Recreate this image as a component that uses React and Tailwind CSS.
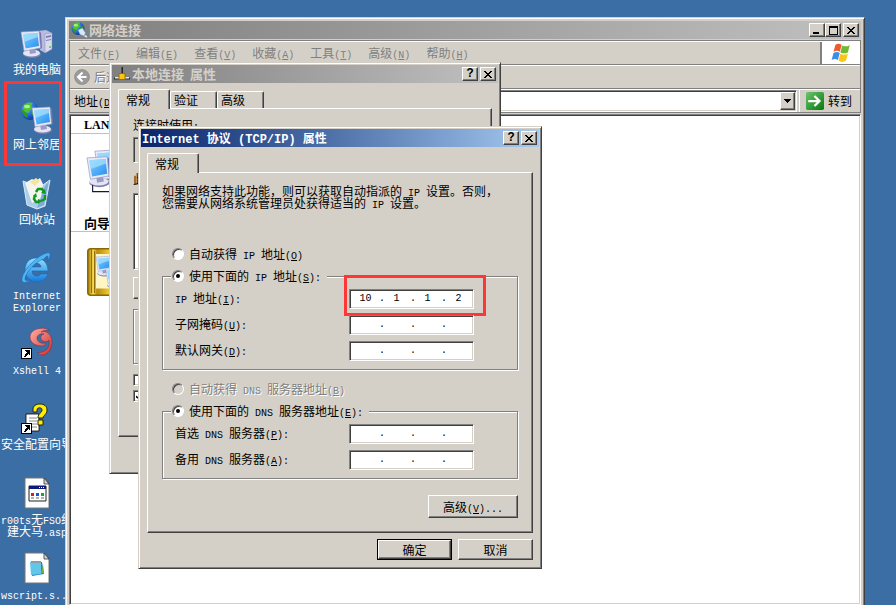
import React from 'react';
import clsx from 'clsx';

const raised =
  'border border-t-white border-l-white border-r-[#404040] border-b-[#404040] shadow-[inset_-1px_-1px_0_#808080]';
const sunken =
  'border border-t-[#808080] border-l-[#808080] border-r-white border-b-white shadow-[inset_1px_1px_0_#404040,inset_-1px_-1px_0_#d4d0c8]';
const frame =
  'bg-[#d4d0c8] border border-t-[#d4d0c8] border-l-[#d4d0c8] border-r-[#404040] border-b-[#404040] shadow-[inset_1px_1px_0_#fff,inset_-1px_-1px_0_#808080]';
const etched = 'border border-[#808080] shadow-[1px_1px_0_#fff,inset_1px_1px_0_#fff]';
const mono = "font-['Liberation_Mono',monospace]";

// Half-width runs are set smaller so that two of them fill one full-width cell.
// An ampersand marks the access key, which is underlined.
const Txt = ({ children, latin = 'text-[10px]' }) => (
  <span className="whitespace-pre">
    {children.split(/([\x20-\x7e]+)/).map((run, i) =>
      i % 2 ? (
        <span key={i} className={clsx(mono, latin, 'leading-0')}>
          {run.split(/(&\w)/).map((part, j) => (j % 2 ? <u key={j}>{part[1]}</u> : part))}
        </span>
      ) : (
        run
      )
    )}
  </span>
);

const CaptionButton = ({ label, children }) => (
  <button
    type="button"
    aria-label={label}
    className={clsx('flex h-[14px] w-4 items-center justify-center bg-[#d4d0c8] text-xs font-bold leading-3 text-black', mono, raised)}
  >
    {children}
  </button>
);

const CloseGlyph = () => (
  <svg width="8" height="7" viewBox="0 0 8 7" shapeRendering="crispEdges">
    <path d="M0 0h2v1h1v1h2V1h1V0h2v1H7v1H6v1H5v1h1v1h1v1h1v1H6V6H5V5H3v1H2v1H0V6h1V5h1V4h1V3H2V2H1V1H0z" />
  </svg>
);

const HelpAndClose = () => (
  <div className="ml-auto flex gap-0.5">
    <CaptionButton label="帮助">?</CaptionButton>
    <CaptionButton label="关闭">
      <CloseGlyph />
    </CaptionButton>
  </div>
);

const Monitor = ({ x = 0, y = 0 }) => (
  <g transform={`translate(${x} ${y})`}>
    <ellipse cx="11" cy="24" rx="9" ry="4" fill="#7d7fb0" />
    <ellipse cx="10.5" cy="23" rx="8.5" ry="3.6" fill="#e4e4f2" />
    <path d="M8 18l6-1 1 6-6 1z" fill="#9a9cc8" />
    <path d="M18 1l2 2 1 15-2 1z" fill="#6e74ae" />
    <path d="M0 2L18 1l1.500 17L3 21z" fill="#e8ebf7" stroke="#8f96c4" strokeWidth=".6" />
    <path d="M2 4l14.500-1L18 16 4.500 18.500z" fill="url(#screen)" />
    <path d="M2 4l14.500-1 .5 4-14 5z" fill="#a9e2ff" opacity=".7" />
  </g>
);

const Globe = ({ cx, cy, r }) => (
  <g>
    <circle cx={cx} cy={cy} r={r} fill="url(#ocean)" />
    <g transform={`translate(${cx - r} ${cy - r}) scale(${r / 9})`} fill="#4fc42f">
      <path d="M3 3c3-3 7-3 9-2l-2 3 2 2-3 2-2 3-3-1-2-3z" />
      <path d="M1 7l3 3 3 2-1 4c-3-2-5-4-5-9zM11 8l4-3 2 4-3 5-4-2z" fill="#2f9a24" />
    </g>
    <ellipse cx={cx - r / 3} cy={cy - r / 2} rx={r / 3} ry={r / 5} fill="#d9ffb0" opacity=".7" />
  </g>
);

const SharedDefs = () => (
  <svg className="absolute size-0" aria-hidden="true">
    <defs>
      <linearGradient id="screen" x1="0" y1="0" x2="1" y2="1">
        <stop offset="0" stopColor="#7fd3ff" />
        <stop offset="1" stopColor="#2a8df0" />
      </linearGradient>
      <radialGradient id="ocean" cx=".35" cy=".3" r=".8">
        <stop offset="0" stopColor="#6fb6f5" />
        <stop offset=".6" stopColor="#1c5fd0" />
        <stop offset="1" stopColor="#0a2c86" />
      </radialGradient>
      <linearGradient id="ie" x1="0" y1="0" x2="0" y2="1">
        <stop offset="0" stopColor="#8fe0ff" />
        <stop offset="1" stopColor="#1779d8" />
      </linearGradient>
      <linearGradient id="shell" x1="0" y1="0" x2="1" y2="1">
        <stop offset="0" stopColor="#ffb0a6" />
        <stop offset="1" stopColor="#d02c2c" />
      </linearGradient>
      <linearGradient id="gold" x1="0" y1="0" x2="1" y2="0">
        <stop offset="0" stopColor="#a87c08" />
        <stop offset=".12" stopColor="#f7dc50" />
        <stop offset=".2" stopColor="#b98a0c" />
        <stop offset=".5" stopColor="#f3d43c" />
        <stop offset="1" stopColor="#b98a0c" />
      </linearGradient>
      <linearGradient id="go" x1="0" y1="0" x2="1" y2="1">
        <stop offset="0" stopColor="#6cc46c" />
        <stop offset="1" stopColor="#067a0c" />
      </linearGradient>
    </defs>
  </svg>
);

const Icon = ({ children, className = 'size-8' }) => (
  <svg viewBox="0 0 32 32" className={clsx('shrink-0 overflow-visible', className)} aria-hidden="true">
    {children}
  </svg>
);

const ShortcutArrow = () => (
  <g shapeRendering="crispEdges">
    <path d="M.5 21.500h10v10H.5z" fill="#fff" stroke="#000" />
    <path d="M4 23h5v5H8v-1H7v1H6v1H5v1H3v-1h1v-2h1v-1h1v-1H5v-1H4z" />
  </g>
);

const Page = ({ children }) => (
  <Icon>
    <path d="M5 1h19l5 6v24H5z" fill="#222" opacity=".3" />
    <path d="M4 1h19l5 6v24H4z" fill="#fff" stroke="#777" />
    <path d="M23 1v6h5z" fill="#cfd6d6" stroke="#333" strokeWidth=".8" />
    {children}
  </Icon>
);

const desktopItems = [
  {
    lines: ['我的电脑'],
    icon: (
      <Icon>
        <path d="M17 4l8-1 6 3v16l-7 4-5-3z" fill="#b9bbdc" />
        <path d="M24 7l7-1v16l-7 4z" fill="#d9daf0" stroke="#8a8cb8" strokeWidth=".5" />
        <path d="M25 9l5-1v2l-5 1zM25 13l5-1v1l-5 1z" fill="#7e80b4" />
        <circle cx="29" cy="20" r="1" fill="#3fd02a" />
        <Monitor y={3} />
      </Icon>
    ),
  },
  {
    lines: ['网上邻居'],
    marked: true,
    icon: (
      <Icon>
        <Globe cx={9} cy={9} r={9} />
        <Monitor x={11} y={4} />
      </Icon>
    ),
  },
  {
    lines: ['回收站'],
    icon: (
      <Icon>
        <path d="M2 4l8 3 12 1 7-5-5 26-8 3-10-4z" fill="#a9cdea" stroke="#dcecf8" />
        <path d="M4 6l7-4 4 2 4-3 3 6-2 14-9 5z" fill="#f4f5ef" />
        <path d="M9 5l6-4 4 3-5 5z" fill="#f5e5a0" />
        <path d="M24 9l4-5-5 24-7 3z" fill="#7fabd6" />
        <g fill="none" stroke="#12981f" strokeWidth="2.500">
          <path d="M15 15l2-3h4l2 3" />
          <path d="M14 18l-1 4 2 3h2" />
          <path d="M24 18v4l-4 2" />
        </g>
        <path d="M20 16l5 1-1-5zM17 22v5l4-3zM12 19l4 1-1-4z" fill="#12981f" />
      </Icon>
    ),
  },
  {
    lines: ['Internet', 'Explorer'],
    icon: (
      <Icon>
        <path
          d="M15 6c7 0 12 5 12 13H11c0 3 2 5 5 5 2 0 3-1 4-2h7c-2 5-6 8-11 8-7 0-12-5-12-12S8 6 15 6zm0 5c-2 0-4 2-4 4h9c0-2-2-4-5-4z"
          fill="url(#ie)"
          stroke="#1668b8"
          strokeWidth=".6"
        />
        <path
          d="M23 7c2-3 4-4 4-2s0 3-1 5c4-6 4-10 0-9C17 3 3 17 1 26c-1 6 4 5 9 2-4 1-6 1-6-1C4 22 14 9 23 7z"
          fill="#4fb5f2"
          stroke="#1668b8"
          strokeWidth=".5"
        />
      </Icon>
    ),
  },
  {
    lines: ['Xshell 4'],
    icon: (
      <Icon>
        <path
          d="M29 3C21-1 9 2 9 10c0 7 8 9 12 9 3 0 4-2 3-3-3 1-8-1-8-5 0-3 4-5 7-4-4 1-4 5-1 7 2 1 5 1 6-1 1 6-1 12-12 13 9 6 15-3 15-11 0-7-5-12-11-10 3-2 6-2 9-2z"
          fill="url(#shell)"
          stroke="#8e2530"
          strokeWidth=".5"
        />
        <ShortcutArrow />
      </Icon>
    ),
  },
  {
    lines: ['安全配置向导'],
    icon: (
      <Icon>
        <path d="M5 12h13v17H5z" fill="#fff" stroke="#000" strokeWidth=".8" />
        <path d="M8 16h8M8 19h8M8 22h8M11 25h5" stroke="#888" />
        <path
          d="M12 10V7c0-3 3-5 7-5s7 2 7 6c0 5-4 5-4 8h-5c0-5 4-5 4-8 0-3-5-3-5 0v2zM17 18h5v5h-5z"
          fill="#ffee00"
          stroke="#222"
        />
        <ShortcutArrow />
      </Icon>
    ),
  },
  {
    lines: ['r00ts无FSO组', '建大马.asp'],
    icon: (
      <Page>
        <path d="M8 9h17v15H8z" fill="#fff" stroke="#222" />
        <path d="M8 9h17v3H8z" fill="#0a1a80" />
        <path d="M18 10h1v1h-1zM20 10h1v1h-1zM22 10h1v1h-1z" fill="#fff" />
        <path d="M10 16h3v3h-3z" fill="#d02020" />
        <path d="M15 16h3v3h-3z" fill="#1c54d8" />
        <path d="M20 16h3v3h-3z" fill="#1fa03a" />
        <path d="M10 21h3M15 21h3M20 21h3" stroke="#666" />
      </Page>
    ),
  },
  {
    lines: ['wscript.s...'],
    icon: (
      <Page>
        <path d="M10 10h11l2 12-12 2z" fill="#2c7fc4" />
        <path d="M9 10h11v12l-10 1z" fill="#62c6ea" />
        <path d="M10 9h10v2H10z" fill="#8aa0a8" />
        <path d="M20 21l2-9 1 9z" fill="#6ab24a" />
      </Page>
    ),
  },
];

const Desktop = () => (
  <ul className="flex w-[74px] flex-col pt-[27px]">
    {desktopItems.map(({ lines, icon, marked }) => (
      <li key={lines[0]} className="relative flex h-[75px] flex-col items-center gap-1 text-white">
        {icon}
        <div className="flex flex-col items-center leading-3">
          {lines.map((line) => (
            <Txt key={line}>{line}</Txt>
          ))}
        </div>
        {marked && <div className="absolute -top-[21px] left-1 h-[85px] w-[58px] border-3 border-[#ff3636]" />}
      </li>
    ))}
  </ul>
);

const menus = ['文件(&F)', '编辑(&E)', '查看(&V)', '收藏(&A)', '工具(&T)', '高级(&N)', '帮助(&H)'];

const bar = 'flex h-6 items-center border-t border-b border-t-white border-b-[#808080]';

const NetworkWindow = () => (
  <section className={clsx('absolute top-[17px] right-[31px] -bottom-1 left-[65px] flex flex-col p-[3px]', frame)}>
    <header className="flex h-[18px] shrink-0 items-center bg-linear-to-r from-[#808080] to-[#c0c0c0] px-0.5 text-[#d4d0c8]">
      <Icon className="size-4">
        <Globe cx={14} cy={13} r={13} />
        <path d="M14 16l9-4 6 10-3 6-8-3z" fill="#d9ebfa" stroke="#5f8fc0" />
        <path d="M27 27l5 3" stroke="#cfe6fa" strokeWidth="3" />
      </Icon>
      <h1 className="ml-0.5 text-[13px] font-bold leading-3">网络连接</h1>
      <div className="ml-auto flex">
        <CaptionButton label="最小化">
          <span className="mt-1.5 mr-0.5 h-0.5 w-1.5 bg-black" />
        </CaptionButton>
        <CaptionButton label="最大化">
          <span className="h-[9px] w-[9px] border border-t-2 border-black" />
        </CaptionButton>
        <span className="w-0.5" />
        <CaptionButton label="关闭">
          <CloseGlyph />
        </CaptionButton>
      </div>
    </header>

    <div className="mt-px border border-b-0 border-l-[#808080] border-r-[#808080] border-t-[#808080]">
      <nav className={bar}>
        <div className="flex flex-1 text-[#808080]">
          {menus.map((menu) => (
            <button key={menu} type="button" className="px-2 leading-3">
              <Txt>{menu}</Txt>
            </button>
          ))}
        </div>
        <div className="flex h-full w-10 items-center justify-center border-l-2 border-[#808080] bg-white">
          <Icon className="size-5">
            <path d="M7 3c4-3 7-2 10 0l-3 11c-3-2-6-2-10 0z" fill="#ee5a2a" />
            <path d="M18 4c4 2 8 2 12-1l-3 12c-4 2-8 2-12 0z" fill="#6cbb2e" />
            <path d="M4 16c4-2 7-2 10 0l-3 11c-3-2-6-2-10 0z" fill="#3f8be8" />
            <path d="M15 17c4 2 8 2 12 0l-3 11c-4 3-8 3-12 0z" fill="#fbc516" />
          </Icon>
        </div>
      </nav>
      <div className={bar}>
        <button type="button" disabled className="flex items-center gap-1 pl-1 leading-3 text-[#808080] [text-shadow:1px_1px_0_#fff]">
          <Icon className="size-4">
            <circle cx="16" cy="16" r="15" fill="#9a9a9a" stroke="#777" />
            <path d="M17 7l-9 9 9 9M8 16h17" fill="none" stroke="#fff" strokeWidth="4" />
          </Icon>
          后退
        </button>
      </div>
      <div className={clsx(bar, 'pl-1')}>
        <label htmlFor="address" className="leading-3">
          <Txt>地址(&D)</Txt>
        </label>
        <div className={clsx('ml-1 flex flex-1 bg-white p-px', sunken)}>
          <select id="address" className="h-[18px] min-w-0 flex-1 appearance-none bg-white outline-none" />
          <span className={clsx('pointer-events-none flex w-[15px] items-center justify-center bg-[#d4d0c8]', raised)}>
            <svg width="7" height="4" viewBox="0 0 7 4" shapeRendering="crispEdges">
              <path d="M0 0h7v1H6v1H5v1H4v1H3V3H2V2H1V1H0z" />
            </svg>
          </span>
        </div>
        <button type="button" className="ml-0.5 flex items-center gap-1 border-l border-white py-0.5 pr-2 pl-1.5 leading-3">
          <Icon className="size-[18px]">
            <rect width="32" height="32" rx="3" fill="url(#go)" />
            <path d="M4 16h20M15 7l9 9-9 9" fill="none" stroke="#fff" strokeWidth="4" />
          </Icon>
          转到
        </button>
      </div>
    </div>

    <main className={clsx('mt-px flex-1 bg-white p-px', sunken)}>
      <h2 className="w-80 border-b border-[#a8c4e8] pt-[3px] pb-0.5 pl-[13px] font-['Liberation_Serif',serif] text-xs font-bold leading-3">
        LAN
      </h2>
      <div className="h-[79px] pt-4 pl-4">
        <Icon className="size-9">
          <Monitor x={7} y={-1} />
          <Monitor x={0} y={5} />
          <path d="M5 31v6h20" fill="none" stroke="#1a1440" />
        </Icon>
      </div>
      <h2 className="w-80 border-b border-[#a8c4e8] pt-0.5 pl-[13px] text-[13px] font-bold leading-4">向导</h2>
      <div className="pt-4 pl-4">
        <Icon className="size-12">
          <rect x=".5" y=".5" width="31" height="31" rx="2" fill="url(#gold)" stroke="#8a6606" />
          <path d="M3 1v29M5 2v28" stroke="#8a6606" strokeWidth=".6" />
          <path d="M6 4h26v23H6z" fill="#fff6c4" />
          <g transform="translate(6 5) scale(.5)">
            <Monitor />
            <Monitor x={13} y={16} />
          </g>
        </Icon>
      </div>
    </main>
  </section>
);

const Tab = ({ children, active }) => (
  <button
    type="button"
    role="tab"
    aria-selected={!!active}
    className={clsx(
      'rounded-t-xs border border-b-0 border-l-white border-t-white border-r-[#404040] bg-[#d4d0c8] text-left leading-3 shadow-[inset_-1px_0_0_#808080]',
      active ? 'z-10 -mb-px h-5 w-[52px] pl-[7px]' : 'h-[17px] w-[47px] pl-[3px]'
    )}
  >
    {children}
  </button>
);

const panel = 'flex-1 border border-t-white border-l-white border-r-[#404040] border-b-[#404040] shadow-[inset_-1px_-1px_0_#808080]';

const ConnectionDialog = () => (
  <section className={clsx('absolute top-[62px] left-[109px] flex h-[412px] w-[392px] flex-col p-0.5', frame)}>
    <header className="flex h-[18px] shrink-0 items-center bg-linear-to-r from-[#808080] to-[#c0c0c0] px-0.5 text-[#d4d0c8]">
      <Icon className="size-4">
        <path d="M15 2h3v14h-3z" fill="#222" />
        <path d="M0 23h32v4H0z" fill="#333" />
        <path d="M2 22h9v3H2zM21 22h9v3h-9z" fill="#d8ecf8" />
        <rect x="10" y="15" width="12" height="12" fill="#f7c418" stroke="#a06c00" strokeWidth="2" />
      </Icon>
      <h2 className="ml-0.5 text-[13px] font-bold leading-3">
        <Txt>本地连接 属性</Txt>
      </h2>
      <HelpAndClose />
    </header>
    <div className="flex flex-1 flex-col px-1.5 pt-1.5 pb-[34px]">
      <div role="tablist" className="flex items-end">
        <Tab active>常规</Tab>
        <Tab>验证</Tab>
        <Tab>高级</Tab>
      </div>
      <div className={clsx('flex flex-col px-3.5 pt-2.5', panel)}>
        <p className="leading-3">
          <Txt>连接时使用:</Txt>
        </p>
        <div className={clsx('mt-1.5 h-[26px]', sunken)} />
        <p className="mt-2.5 leading-3">此</p>
        <div className={clsx('mt-2 h-[77px] bg-white', sunken)} />
        <button type="button" aria-label="安装" className={clsx('mt-[7px] h-[22px] w-24', raised)} />
        <div className={clsx('mt-2.5 h-[55px]', etched)} />
        <input type="checkbox" aria-label="显示图标" className={clsx('mt-2.5 size-3 shrink-0 appearance-none bg-white', sunken)} />
        <input
          type="checkbox"
          defaultChecked
          aria-label="连接通知"
          className={clsx(
            'mt-1 grid size-3 shrink-0 appearance-none place-items-center bg-white before:size-1.5 before:bg-black before:[clip-path:polygon(0_40%,40%_70%,100%_0,100%_40%,40%_100%,0_75%)]',
            sunken
          )}
        />
      </div>
    </div>
  </section>
);

const Radio = ({ children, disabled, ...props }) => (
  <label
    className={clsx(
      'flex h-4 items-center gap-[5px] leading-3',
      disabled && 'text-[#808080] [text-shadow:1px_1px_0_#fff]'
    )}
  >
    <input
      type="radio"
      disabled={disabled}
      className="grid size-3 appearance-none place-items-center rounded-full border border-t-[#808080] border-r-white border-b-white border-l-[#808080] bg-white shadow-[inset_1px_1px_0_#404040] checked:before:size-1 checked:before:rounded-full checked:before:bg-black disabled:bg-[#d4d0c8]"
      {...props}
    />
    <Txt>{children}</Txt>
  </label>
);

const AddressField = ({ id, label, octets = ['', '', '', ''], marked }) => (
  <div className="flex items-center">
    <label htmlFor={id} className="w-[174px] pb-0.5 leading-3">
      <Txt>{label}</Txt>
    </label>
    <div className={clsx('relative flex h-5 w-[125px] items-center bg-white pl-1 text-[10px] leading-4', mono, sunken)}>
      {octets.map((octet, i) => (
        <React.Fragment key={i}>
          {i > 0 && <span className="w-2 text-right">.</span>}
          <input
            id={i === 0 ? id : undefined}
            aria-label={i === 0 ? undefined : `${id} ${i + 1}`}
            defaultValue={octet}
            className="h-4 w-[23px] bg-transparent text-center outline-none"
          />
        </React.Fragment>
      ))}
      {marked && (
        <div className="pointer-events-none absolute -top-[15px] -left-1.5 h-[41px] w-[142px] border-3 border-[#ff3636]" />
      )}
    </div>
  </div>
);

const Group = ({ legend, children }) => (
  <fieldset className={clsx('flex flex-col gap-1.5 pt-[5px] pb-2 pl-3', etched)}>
    <legend className="-ml-1 bg-[#d4d0c8] pr-1.5 pl-px">{legend}</legend>
    {children}
  </fieldset>
);

const TcpIpDialog = () => (
  <section className={clsx('absolute top-[126px] left-[138px] w-[404px] p-0.5', frame)}>
    <header className="flex h-[18px] items-center bg-linear-to-r from-[#0a246a] to-[#a6caf0] pr-0.5 pl-px text-white">
      <h2 className="text-xs font-bold leading-3">
        <Txt latin="text-xs">Internet 协议 (TCP/IP) 属性</Txt>
      </h2>
      <HelpAndClose />
    </header>
    <div className="flex flex-col px-1.5 pt-1.5 pb-1.5">
      <div role="tablist" className="flex items-end">
        <Tab active>常规</Tab>
      </div>
      <div className={clsx('px-3.5 pt-3 pb-3.5', panel)}>
        <p className="leading-3">
          <Txt>如果网络支持此功能，则可以获取自动指派的 IP 设置。否则，</Txt>
          <br />
          <Txt>您需要从网络系统管理员处获得适当的 IP 设置。</Txt>
        </p>

        <div className="mt-[37px] pl-2.5">
          <Radio name="ip">自动获得 IP 地址(&O)</Radio>
        </div>
        <div className="mt-1.5">
          <Group legend={<Radio name="ip" defaultChecked>使用下面的 IP 地址(&S):</Radio>}>
            <AddressField id="ip-address" label="IP 地址(&I):" octets={['10', '1', '1', '2']} marked />
            <AddressField id="subnet-mask" label="子网掩码(&U):" />
            <AddressField id="gateway" label="默认网关(&D):" />
          </Group>
        </div>

        <div className="mt-[11px] pl-2.5">
          <Radio name="dns" disabled>自动获得 DNS 服务器地址(&B)</Radio>
        </div>
        <div className="mt-1.5">
          <Group legend={<Radio name="dns" defaultChecked>使用下面的 DNS 服务器地址(&E):</Radio>}>
            <AddressField id="dns-first" label="首选 DNS 服务器(&P):" />
            <AddressField id="dns-second" label="备用 DNS 服务器(&A):" />
          </Group>
        </div>

        <div className="mt-4 flex justify-end">
          <button type="button" className={clsx('h-[23px] w-[90px] leading-3', raised)}>
            <Txt>高级(&V)...</Txt>
          </button>
        </div>
      </div>
      <div className="mt-1.5 flex justify-end gap-1.5">
        <button type="button" className="w-[75px] border border-black">
          <span className={clsx('flex h-[19px] items-center justify-center leading-3', raised)}>确定</span>
        </button>
        <button type="button" className={clsx('h-[21px] w-[75px] leading-3', raised)}>
          取消
        </button>
      </div>
    </div>
  </section>
);

export default function App() {
  return (
    <div className="relative h-screen overflow-hidden bg-[#3a6ea5] font-['Noto_Sans_CJK_SC',sans-serif] text-xs text-black">
      <SharedDefs />
      <Desktop />
      <NetworkWindow />
      <ConnectionDialog />
      <TcpIpDialog />
    </div>
  );
}
